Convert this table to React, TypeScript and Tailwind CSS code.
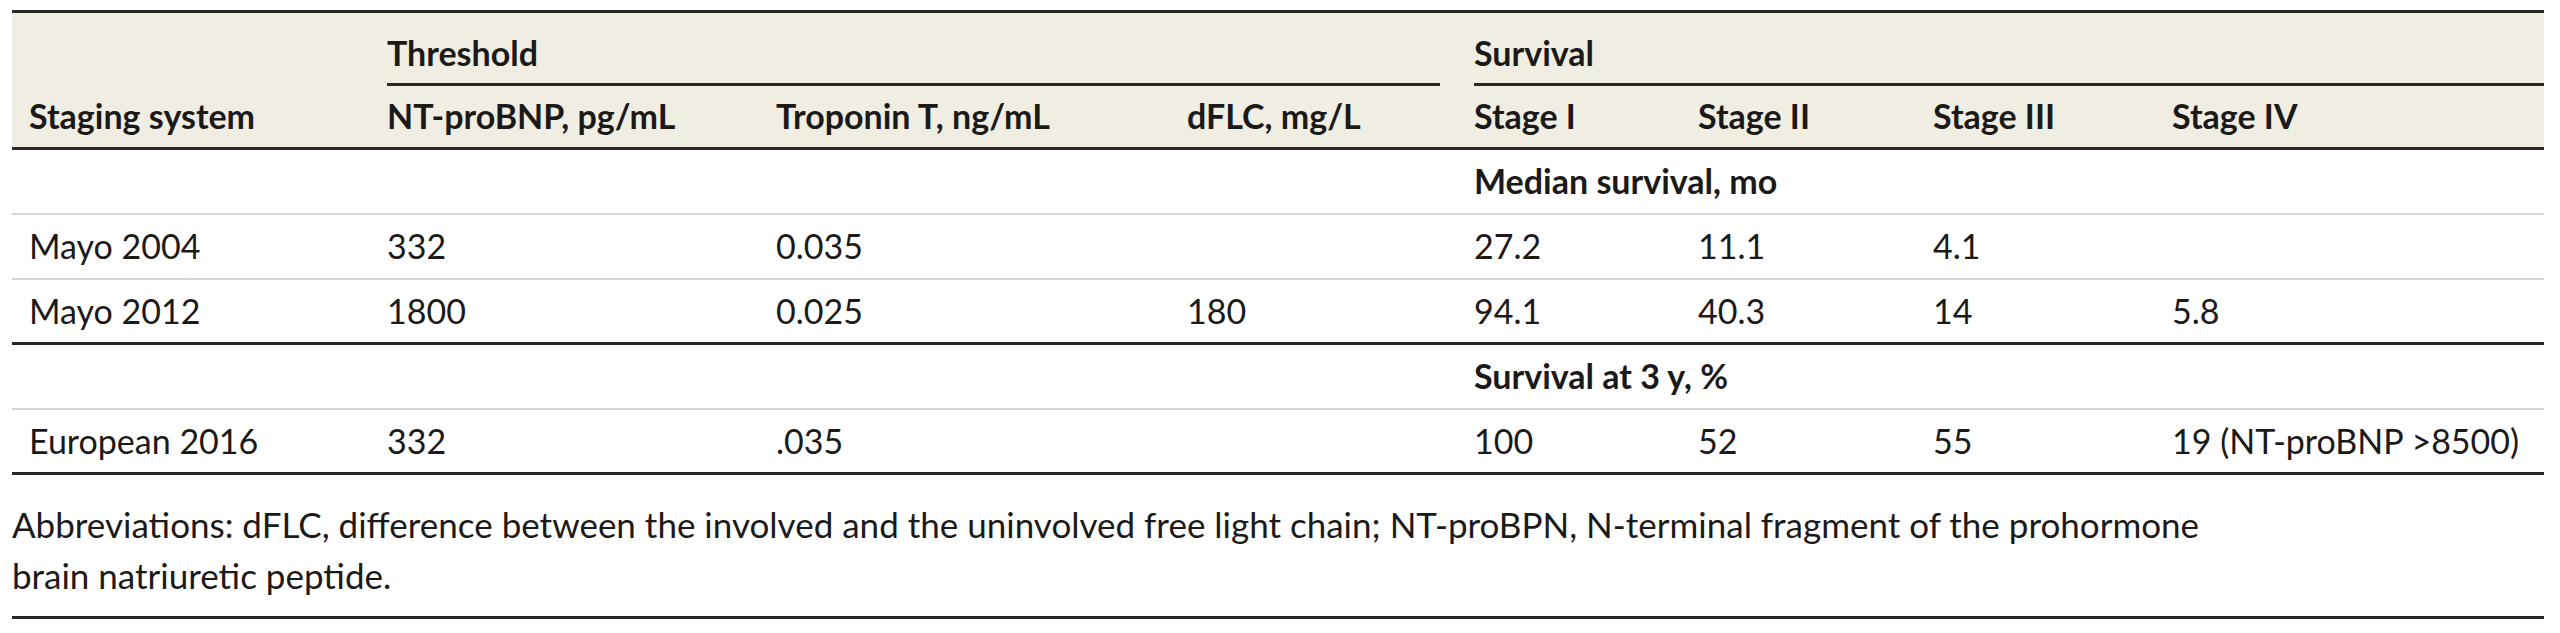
import React from 'react'

const font = { fontFamily: 'Lato, "Liberation Sans", sans-serif' }

const rows = [
  { kind: 'label', text: 'Median survival, mo', border: 'light' },
  { kind: 'data', cells: ['Mayo 2004', '332', '0.035', '', '27.2', '11.1', '4.1', ''], border: 'light' },
  { kind: 'data', cells: ['Mayo 2012', '1800', '0.025', '180', '94.1', '40.3', '14', '5.8'], border: 'dark' },
  { kind: 'label', text: 'Survival at 3 y, %', border: 'light' },
  { kind: 'data', cells: ['European 2016', '332', '.035', '', '100', '52', '55', '19 (NT-proBNP >8500)'], border: 'dark' },
]

export default function App() {
  return (
    <div className="bg-white w-[2560px] h-[633px] pt-[10px] pl-[12px] text-[#1c1a19]" style={font}>
      <table className="table-fixed border-collapse w-[2532px] text-[34px] leading-[40px]">
        <colgroup>
          <col className="w-[358px]" />
          <col className="w-[389px]" />
          <col className="w-[411px]" />
          <col className="w-[287px]" />
          <col className="w-[224px]" />
          <col className="w-[235px]" />
          <col className="w-[239px]" />
          <col className="w-[389px]" />
        </colgroup>
        <thead className="bg-[#f0eee3] font-bold">
          <tr className="border-t-[3px] border-[#2a2827] h-[74px]">
            <th />
            <th colSpan={3} className="pl-[17px] pr-[17px] align-bottom text-left">
              <div className="border-b-[3px] border-[#2a2827] pb-[10px]">Threshold</div>
            </th>
            <th colSpan={4} className="pl-[17px] align-bottom text-left">
              <div className="border-b-[3px] border-[#2a2827] pb-[10px]">Survival</div>
            </th>
          </tr>
          <tr className="border-b-[3px] border-[#2a2827] h-[63px]">
            {['Staging system', 'NT-proBNP, pg/mL', 'Troponin T, ng/mL', 'dFLC, mg/L', 'Stage I', 'Stage II', 'Stage III', 'Stage IV'].map((h) => (
              <th key={h} className="pl-[17px] pb-[11px] align-bottom text-left whitespace-nowrap">
                {h}
              </th>
            ))}
          </tr>
        </thead>
        <tbody>
          {rows.map((r, i) => (
            <tr
              key={i}
              className={`h-[65px] ${r.border === 'dark' ? 'border-b-[3px] border-[#2a2827]' : 'border-b-2 border-[#d8d6cd]'}`}
            >
              {r.kind === 'label' ? (
                <>
                  <td colSpan={4} />
                  <td colSpan={4} className="pl-[17px] font-bold whitespace-nowrap">
                    {r.text}
                  </td>
                </>
              ) : (
                r.cells!.map((c, j) => (
                  <td key={j} className="pl-[17px] whitespace-nowrap">
                    {c}
                  </td>
                ))
              )}
            </tr>
          ))}
        </tbody>
      </table>
      <p className="w-[2532px] text-[35px] leading-[51px] pt-[24px] pb-[15px] border-b-[3px] border-[#2a2827] whitespace-nowrap">
        Abbreviations: dFLC, difference between the involved and the uninvolved free light chain; NT-proBPN, N-terminal fragment of the prohormone
        <br />
        brain natriuretic peptide.
      </p>
    </div>
  )
}
